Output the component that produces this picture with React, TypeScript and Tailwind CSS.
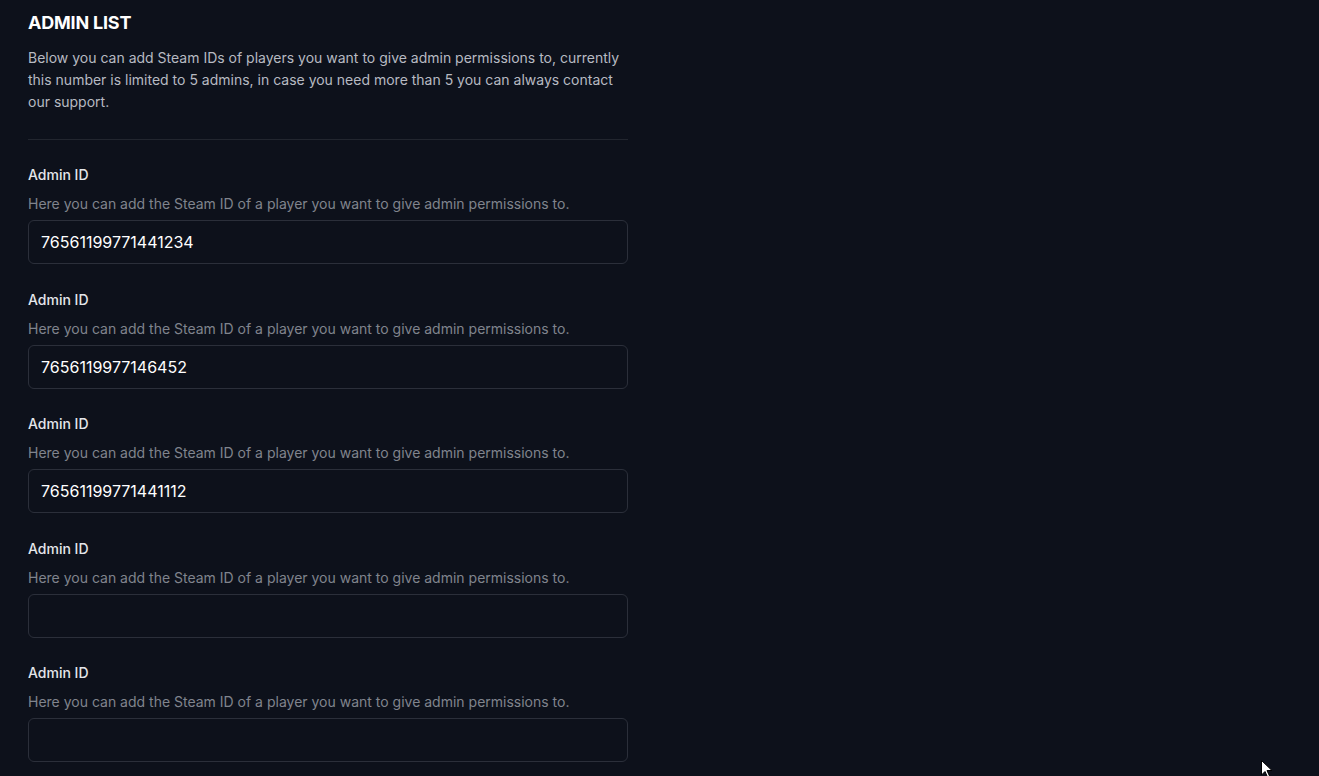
import React from "react";

const ids = ["76561199771441234", "7656119977146452", "76561199771441112", "", ""];

export default function App() {
  return (
    <div className="relative min-h-[776px] w-full overflow-hidden bg-[#0d111b] font-['Inter','Noto_Sans',sans-serif]">
      <div className="w-[600px] ml-[28px] pt-[9px]">
        <h2 className="text-[18px] leading-[28px] font-bold text-white tracking-[-0.2px]">ADMIN LIST</h2>
        <p className="mt-[10px] text-[14px] leading-[22px] text-[#b7bac2]">
          Below you can add Steam IDs of players you want to give admin permissions to, currently this number is limited to 5 admins, in case you need more than 5 you can always contact our support.
        </p>
        <div className="mt-[26px] h-px bg-[#22262f]" />
        <div className="mt-[25px] flex flex-col">
          {ids.map((id, i) => (
            <div key={i} className="flex flex-col mb-[25.5px]">
              <label className="text-[14px] leading-[20px] font-medium text-[#e4e6ea]">Admin ID</label>
              <p className="mt-[9px] text-[14px] leading-[20px] text-[#80848d]">
                Here you can add the Steam ID of a player you want to give admin permissions to.
              </p>
              <input
                defaultValue={id}
                className="mt-[6px] h-[44px] w-full rounded-[6px] border border-[#2b2f3a] bg-transparent px-[12px] text-[16px] text-white outline-none"
              />
            </div>
          ))}
        </div>
      </div>
      <svg className="absolute left-[1261px] top-[760px]" width="12" height="18" viewBox="0 0 12 18">
        <path d="M0.5 0.5 L0.5 15 L4 11.5 L6.5 17 L8.5 16 L6 10.5 L11 10.5 Z" fill="white" stroke="black" strokeWidth="1" />
      </svg>
    </div>
  );
}
